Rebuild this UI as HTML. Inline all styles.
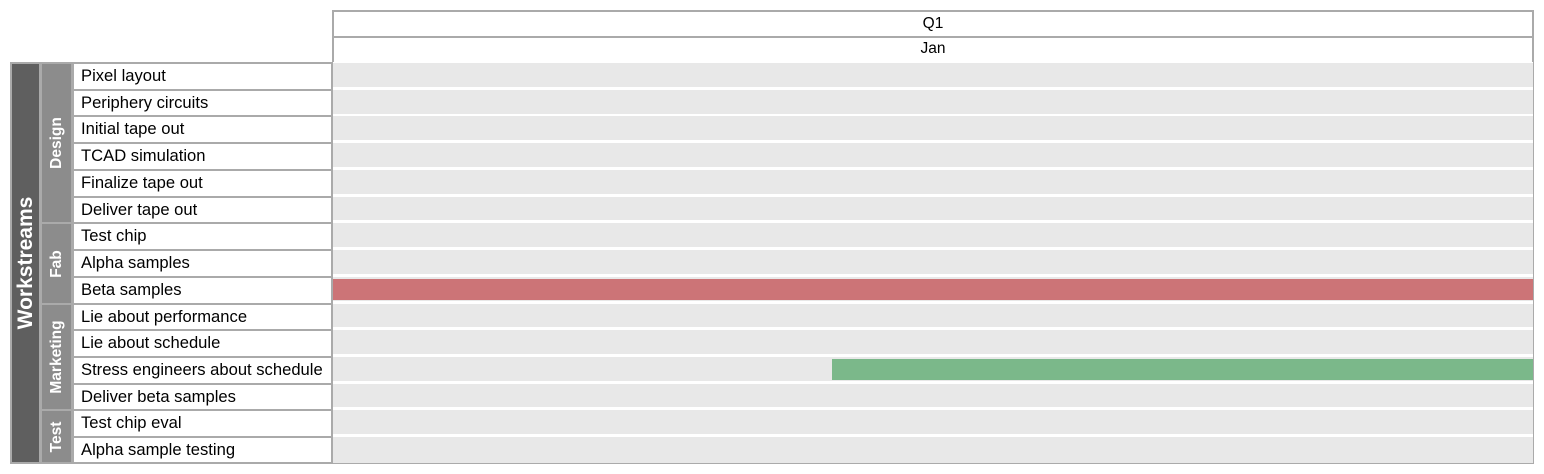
<!DOCTYPE html>
<html><head><meta charset="utf-8"><style>
body{margin:0;width:1544px;height:474px;background:#fff;position:relative;overflow:hidden;font-family:"Liberation Sans",Arial,sans-serif;}
div{position:absolute;box-sizing:border-box;}
.h{left:332px;width:1202px;border:2px solid #aaa;background:#fff;text-align:center;font-size:15.5px;color:#000;}
.lab{left:72px;width:261px;border:2px solid #aaa;background:#fff;font-size:16.6px;color:#000;padding-left:7px;line-height:23px;}
.g{background:#e8e8e8;left:333px;width:1200px;}
.grp{left:40px;width:33px;background:#8c8c8c;border:2px solid #aaa;}
.vt{position:absolute;left:50%;top:50%;transform:translate(-50%,-50%) rotate(-90deg);white-space:nowrap;color:#fff;font-weight:bold;}
</style></head><body>
<div class="h" style="top:10px;height:28px;line-height:23px">Q1</div>
<div class="h" style="top:36px;height:28px;line-height:22px">Jan</div>
<div style="left:332px;top:62px;width:1202px;height:402px;border:1px solid #aaa;border-top:none;background:#fff"></div>
<div class="g" style="top:63px;height:24px"></div>
<div class="g" style="top:90px;height:24px"></div>
<div class="g" style="top:116px;height:24px"></div>
<div class="g" style="top:143px;height:24px"></div>
<div class="g" style="top:170px;height:24px"></div>
<div class="g" style="top:197px;height:23px"></div>
<div class="g" style="top:223px;height:24px"></div>
<div class="g" style="top:250px;height:24px"></div>
<div class="g" style="top:277px;height:24px"></div>
<div class="g" style="top:304px;height:23px"></div>
<div class="g" style="top:330px;height:24px"></div>
<div class="g" style="top:357px;height:24px"></div>
<div class="g" style="top:384px;height:23px"></div>
<div class="g" style="top:410px;height:24px"></div>
<div class="g" style="top:437px;height:26px"></div>
<div style="left:333px;top:279px;width:1200px;height:21px;background:#cc7477"></div>
<div style="left:832px;top:359px;width:701px;height:21px;background:#7bb88a"></div>

<div style="left:10px;top:62px;width:31px;height:402px;background:#5f5f5f;border:2px solid #aaa"><span class="vt" style="font-size:21px">Workstreams</span></div>
<div class="grp" style="top:62px;height:162px"><span class="vt" style="font-size:15.5px">Design</span></div>
<div class="grp" style="top:222px;height:83px"><span class="vt" style="font-size:15.5px">Fab</span></div>
<div class="grp" style="top:303px;height:108px"><span class="vt" style="font-size:15.5px">Marketing</span></div>
<div class="grp" style="top:409px;height:55px"><span class="vt" style="font-size:15.5px">Test</span></div>

<div class="lab" style="top:62px;height:29px">Pixel layout</div>
<div class="lab" style="top:89px;height:28px">Periphery circuits</div>
<div class="lab" style="top:115px;height:29px">Initial tape out</div>
<div class="lab" style="top:142px;height:29px">TCAD simulation</div>
<div class="lab" style="top:169px;height:29px">Finalize tape out</div>
<div class="lab" style="top:196px;height:28px">Deliver tape out</div>
<div class="lab" style="top:222px;height:29px">Test chip</div>
<div class="lab" style="top:249px;height:29px">Alpha samples</div>
<div class="lab" style="top:276px;height:29px">Beta samples</div>
<div class="lab" style="top:303px;height:28px">Lie about performance</div>
<div class="lab" style="top:329px;height:29px">Lie about schedule</div>
<div class="lab" style="top:356px;height:29px">Stress engineers about schedule</div>
<div class="lab" style="top:383px;height:28px">Deliver beta samples</div>
<div class="lab" style="top:409px;height:29px">Test chip eval</div>
<div class="lab" style="top:436px;height:28px">Alpha sample testing</div>
</body></html>
